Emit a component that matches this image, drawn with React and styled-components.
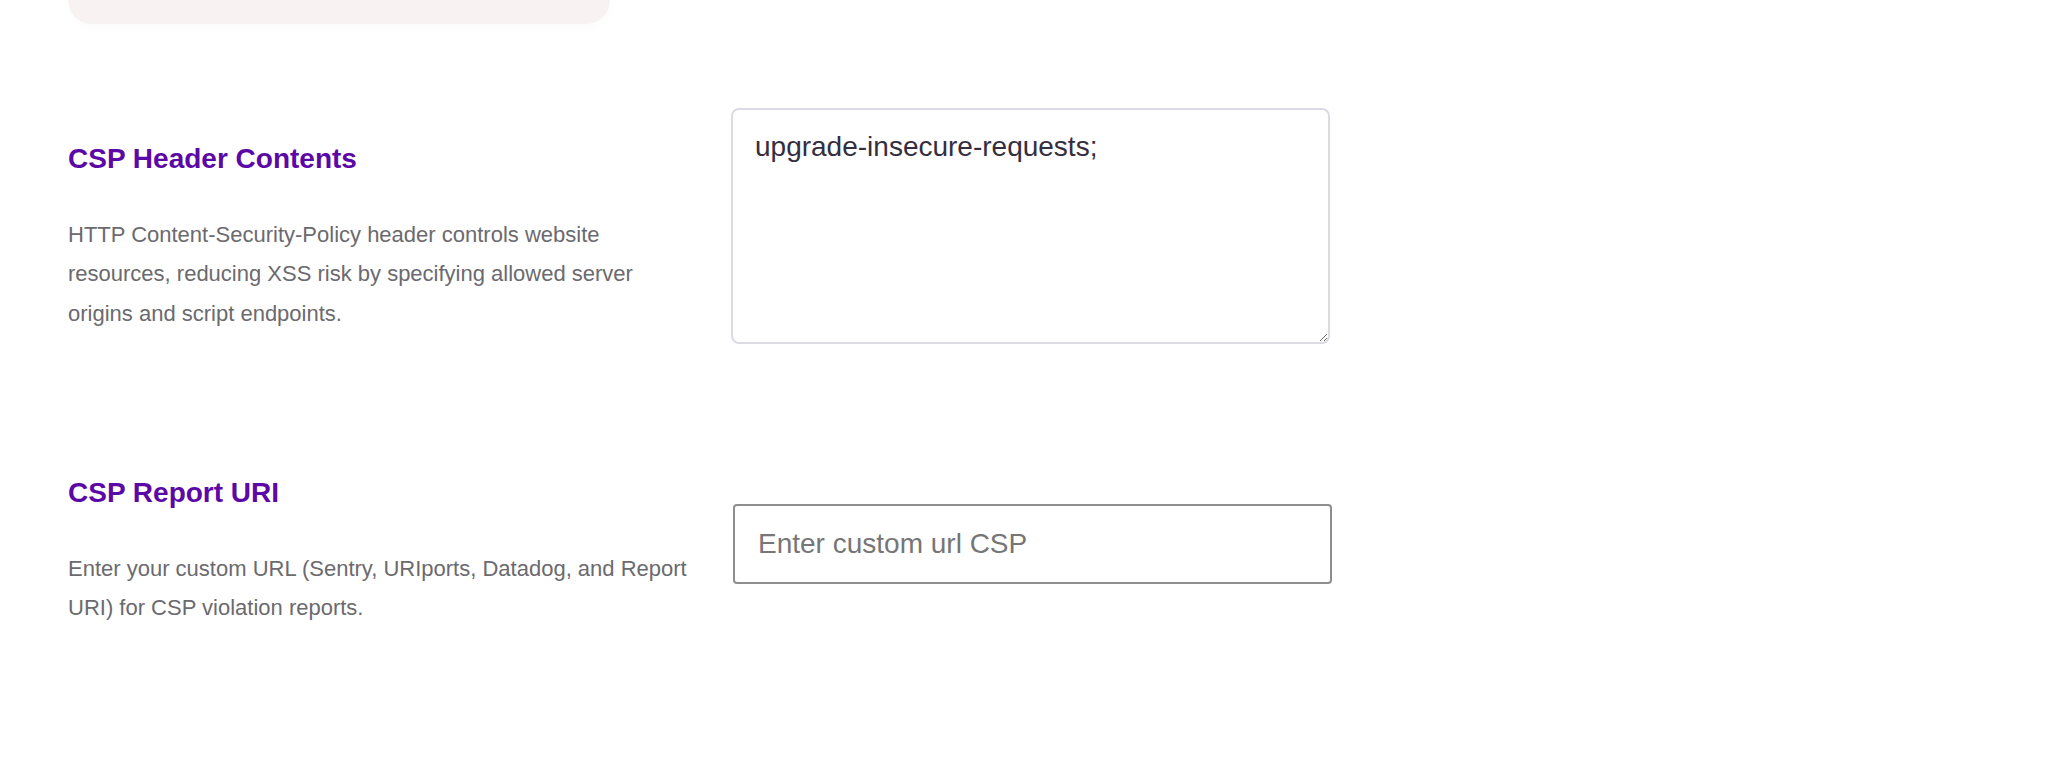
import React from "react";
import styled, { createGlobalStyle } from "styled-components";

const Global = createGlobalStyle`
  html, body { margin: 0; padding: 0; background: #ffffff; }
  body { font-family: "Liberation Sans", Arial, sans-serif; }
  * { box-sizing: border-box; }
`;

const Page = styled.div`
  padding: 0 0 0 68px;
  width: 2060px;
  min-height: 760px;
`;

const TopCard = styled.div`
  width: 542px;
  height: 24px;
  background: #f8f2f2;
  border-radius: 0 0 24px 24px;
  box-shadow: 0 4px 12px rgba(80, 40, 40, 0.02);
`;

const Settings = styled.div`
  display: flex;
  flex-direction: column;
  gap: 132px;
  margin-top: 84px;
`;

const Row = styled.section`
  display: flex;
  align-items: flex-start;
  gap: 31px;
`;

const Info = styled.div`
  width: 632px;
  flex-shrink: 0;
  padding-top: ${(p) => p.$offset || 0}px;
`;

const Title = styled.h3`
  margin: 0;
  font-size: 28px;
  line-height: 1.2;
  font-weight: 700;
  color: #5c08a6;
`;

const Desc = styled.p`
  margin: 39px 0 0;
  font-size: 22px;
  line-height: 39.8px;
  color: #6b6a6e;
`;

const Field = styled.div`
  padding-top: ${(p) => p.$offset || 0}px;
`;

const TextArea = styled.textarea`
  display: block;
  width: 599px;
  height: 236px;
  padding: 21px 22px;
  border: 2px solid #dcdbe3;
  border-radius: 8px;
  font-family: "Liberation Sans", Arial, sans-serif;
  font-size: 28px;
  color: #342e40;
  background: #ffffff;
  outline: none;
`;

const Input = styled.input`
  display: block;
  width: 599px;
  height: 80px;
  margin-left: 2px;
  padding: 0 23px;
  border: 2px solid #8e8e8e;
  border-radius: 4px;
  font-family: "Liberation Sans", Arial, sans-serif;
  font-size: 28px;
  color: #342e40;
  background: #ffffff;
  outline: none;
  &::placeholder { color: #767676; }
`;

export default function App() {
  return (
    <>
      <Global />
      <Page>
        <TopCard />
        <Settings>
          <Row>
            <Info $offset={34}>
              <Title>CSP Header Contents</Title>
              <Desc>
                HTTP Content-Security-Policy header controls website resources,
                reducing XSS risk by specifying allowed server origins and script
                endpoints.
              </Desc>
            </Info>
            <Field>
              <TextArea defaultValue="upgrade-insecure-requests;" spellCheck={false} />
            </Field>
          </Row>
          <Row>
            <Info>
              <Title>CSP Report URI</Title>
              <Desc>
                Enter your custom URL (Sentry, URIports, Datadog, and Report URI)
                for CSP violation reports.
              </Desc>
            </Info>
            <Field $offset={28}>
              <Input placeholder="Enter custom url CSP" />
            </Field>
          </Row>
        </Settings>
      </Page>
    </>
  );
}
